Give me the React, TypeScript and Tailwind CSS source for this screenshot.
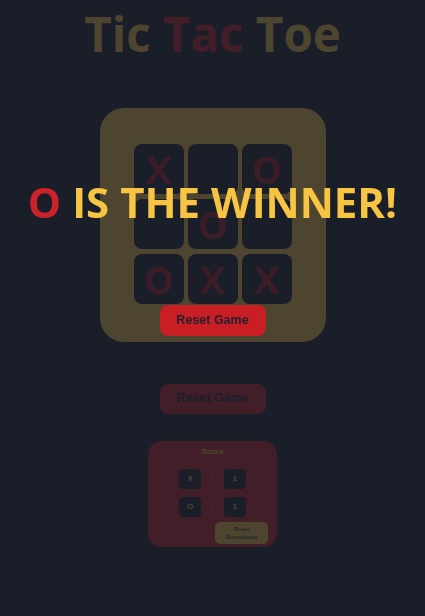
const board = ['X', '', 'O', '', 'O', '', 'O', 'X', 'X'];

function ScoreRow({ player, score }: { player: string; score: number }) {
    return (
        <div className="flex items-center justify-center gap-[10px]">
            <div className="w-[22px] h-[20px] rounded-[4px] bg-[#1a1e2a] flex items-center justify-center text-[8px] font-bold text-[#f5c542]">
                {player}
            </div>
            <span className="text-[8px] font-bold text-[#f5c542]">:</span>
            <div className="w-[22px] h-[20px] rounded-[4px] bg-[#1a1e2a] flex items-center justify-center text-[8px] font-bold text-[#f5c542]">
                {score}
            </div>
        </div>
    );
}

export default function App() {
    return (
        <div className="relative min-h-screen bg-[#1a1e2a] font-['Open_Sans',sans-serif]">
            <div className="flex flex-col items-center">
                <h1 className="mt-[10px] text-[47.5px] leading-none font-bold text-[#f5c542]">
                    Tic <span className="text-[#c81e24]">Tac</span> Toe
                </h1>

                <div className="mt-[50px] w-[226px] h-[234px] rounded-[24px] bg-[#f5c542] pt-[36px] px-[34px]">
                    <div className="grid grid-cols-3 gap-x-[4px] gap-y-[5px]">
                        {board.map((cell, i) => (
                            <div
                                key={i}
                                className="w-[50px] h-[50px] rounded-[8px] bg-[#1a1e2a] flex items-center justify-center text-[38px] leading-none font-bold text-[#a81c22]"
                            >
                                {cell}
                            </div>
                        ))}
                    </div>
                </div>

                <button className="mt-[42px] w-[106px] h-[30px] rounded-[8px] bg-[#c81e24] font-['Liberation_Sans',sans-serif] text-[12.5px] font-bold text-[#1f2230]">
                    Reset Game
                </button>

                <div className="mt-[27px] w-[129px] h-[106px] rounded-[14px] bg-[#c81e24] pt-[6px] flex flex-col font-['Liberation_Sans',sans-serif]">
                    <div className="text-center text-[8px] leading-[10px] font-bold text-[#f5c542]">Score</div>
                    <div className="mt-[12px] flex flex-col gap-[8px]">
                        <ScoreRow player="X" score={1} />
                        <ScoreRow player="O" score={1} />
                    </div>
                    <button className="mt-[5px] mr-[9px] self-end w-[53px] h-[22px] rounded-[5px] bg-[#f5c542] text-[6px] leading-[8px] text-[#1f2230]">
                        Reset
                        <br />
                        Scoreboard
                    </button>
                </div>
            </div>

            {/* dim layer */}
            <div className="fixed inset-0 bg-[#1a1e2a]/[0.77]" />

            {/* winner overlay */}
            <div className="fixed inset-0 flex flex-col items-center pt-[181px]">
                <div className="text-[42px] leading-none font-bold text-[#f7c543] whitespace-nowrap">
                    <span className="text-[#cc2229]">O</span> IS THE WINNER!
                </div>
                <button className="mt-[82px] w-[106px] h-[31px] rounded-[8px] bg-[#c81e24] font-['Liberation_Sans',sans-serif] text-[12.5px] font-bold text-[#1f2230]">
                    Reset Game
                </button>
            </div>
        </div>
    );
}
